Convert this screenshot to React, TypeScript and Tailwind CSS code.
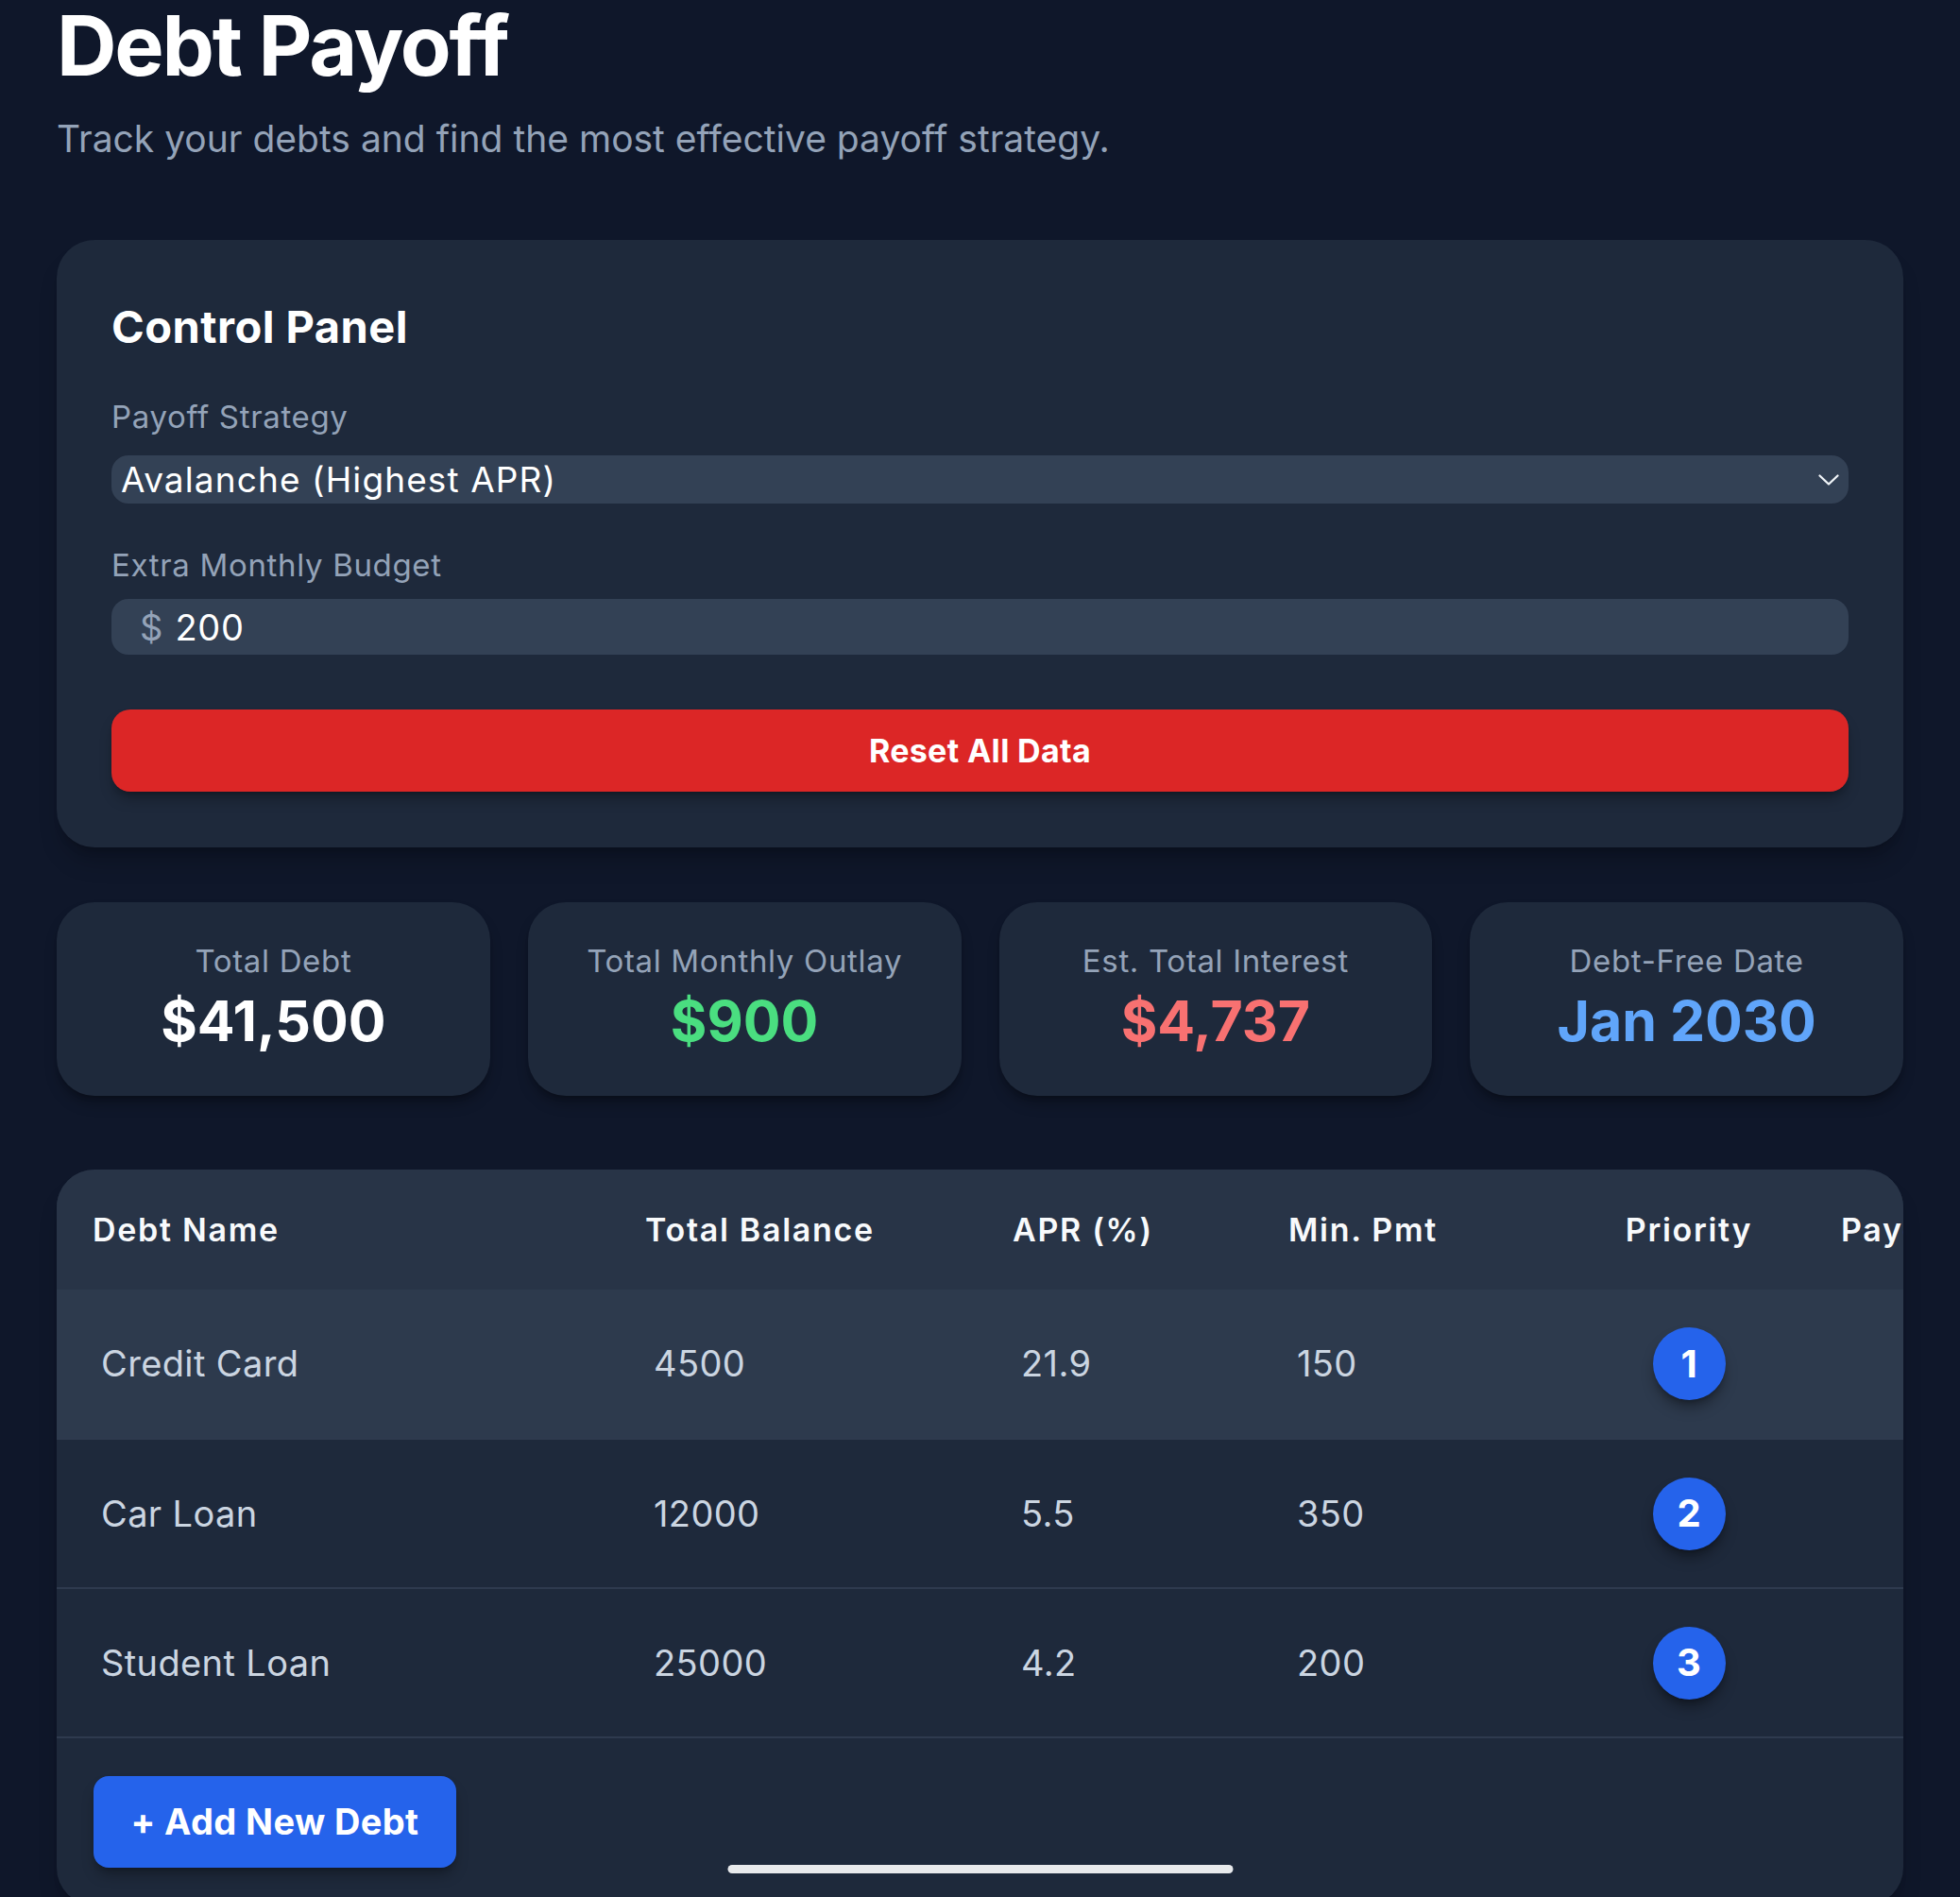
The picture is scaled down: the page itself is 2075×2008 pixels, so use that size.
import React from 'react';

type Debt = { name: string; balance: string; apr: string; min: string; priority: number };

const debts: Debt[] = [
  { name: 'Credit Card', balance: '4500', apr: '21.9', min: '150', priority: 1 },
  { name: 'Car Loan', balance: '12000', apr: '5.5', min: '350', priority: 2 },
  { name: 'Student Loan', balance: '25000', apr: '4.2', min: '200', priority: 3 },
];

const stats = [
  { label: 'Total Debt', value: '$41,500', color: 'text-white' },
  { label: 'Total Monthly Outlay', value: '$900', color: 'text-[#4ade80]' },
  { label: 'Est. Total Interest', value: '$4,737', color: 'text-[#f87171]' },
  { label: 'Debt-Free Date', value: 'Jan 2030', color: 'text-[#60a5fa]' },
];

const App = () => {
  return (
    <div className="min-h-screen bg-[#0f172a] font-['Inter','Noto_Sans',sans-serif] text-white">
      <div className="px-[60px] pt-[4px] pb-[40px]">
        <h1 className="text-[88px] font-bold leading-none tracking-tight">Debt Payoff</h1>
        <p className="mt-[26px] text-[39px] leading-[57px] text-[#94a3b8]">
          Track your debts and find the most effective payoff strategy.
        </p>

        {/* control panel */}
        <section className="mt-[79px] rounded-[40px] bg-[#1e293b] px-[58px] pt-[58px] pb-[59px] shadow-xl shadow-black/20">
          <h2 className="text-[47px] font-bold leading-[68px] tracking-[0.01em]">Control Panel</h2>

          <label className="mt-[38px] block text-[33px] leading-[46px] tracking-[0.02em] text-[#94a3b8]">Payoff Strategy</label>
          <div className="mt-[18px] flex h-[51px] items-center rounded-[18px] bg-[#334155] pl-[10px] pr-[10px]">
            <span className="flex-1 text-[37px] leading-none tracking-[0.03em]">Avalanche (Highest APR)</span>
            <svg width="22" height="12" viewBox="0 0 22 12" fill="none">
              <polyline points="1.5,1.5 11,10.5 20.5,1.5" stroke="#f1f5f9" strokeWidth="2.2" strokeLinecap="round" strokeLinejoin="round" />
            </svg>
          </div>

          <label className="mt-[42px] block text-[33px] leading-[46px] tracking-[0.02em] text-[#94a3b8]">Extra Monthly Budget</label>
          <div className="mt-[13px] flex h-[59px] items-center rounded-[18px] bg-[#334155] pl-[30px]">
            <span className="text-[38px] leading-none text-[#94a3b8]">$</span>
            <input
              defaultValue="200"
              className="ml-[13px] flex-1 bg-transparent text-[38px] leading-none tracking-[0.02em] text-white outline-none"
            />
          </div>

          <button className="mt-[58px] h-[87px] w-full rounded-[20px] bg-[#dc2626] text-[34px] font-bold tracking-[0.01em] text-white shadow-lg shadow-black/30">
            Reset All Data
          </button>
        </section>

        {/* summary */}
        <div className="mt-[58px] grid grid-cols-4 gap-[40px]">
          {stats.map((s) => (
            <div
              key={s.label}
              className="flex h-[205px] flex-col items-center rounded-[40px] bg-[#1e293b] pt-[38px] shadow-lg shadow-black/30"
            >
              <div className="text-[33px] leading-[48px] tracking-[0.02em] text-[#94a3b8]">{s.label}</div>
              <div className={`mt-[4px] text-[59px] font-bold leading-[72px] ${s.color}`}>{s.value}</div>
            </div>
          ))}
        </div>

        {/* debts table */}
        <section className="mt-[78px] overflow-hidden rounded-[40px] bg-[#1e293b] shadow-xl shadow-black/20">
          <table className="w-[2151px] table-fixed border-collapse text-left">
            <colgroup>
              <col className="w-[585px]" />
              <col className="w-[389px]" />
              <col className="w-[292px]" />
              <col className="w-[339px]" />
              <col className="w-[246px]" />
              <col className="w-[300px]" />
            </colgroup>
            <thead className="bg-[#283447]">
              <tr className="h-[127px] text-[34px] font-semibold tracking-wider text-[#f8fafc]">
                <th className="pl-[38px] font-semibold">Debt Name</th>
                <th className="pl-[38px] font-semibold">Total Balance</th>
                <th className="pl-[38px] font-semibold">APR (%)</th>
                <th className="pl-[38px] font-semibold">Min. Pmt</th>
                <th className="text-center font-semibold">Priority</th>
                <th className="pl-[38px] font-semibold whitespace-nowrap">Payoff Date</th>
              </tr>
            </thead>
            <tbody>
              {debts.map((d, i) => (
                <tr
                  key={d.name}
                  className={`h-[158px] border-b-2 border-[#2e3a4e] ${i === 0 ? 'bg-[#2d3a4d]' : ''}`}
                >
                  <td className="pl-[38px]">
                    <input defaultValue={d.name} className="w-full bg-transparent px-[9px] text-[38px] tracking-[0.01em] text-[#cbd5e1] outline-none" />
                  </td>
                  <td className="pl-[38px]">
                    <input defaultValue={d.balance} className="w-full bg-transparent px-[9px] text-[38px] tracking-[0.01em] text-[#cbd5e1] outline-none" />
                  </td>
                  <td className="pl-[38px]">
                    <input defaultValue={d.apr} className="w-full bg-transparent px-[9px] text-[38px] tracking-[0.01em] text-[#cbd5e1] outline-none" />
                  </td>
                  <td className="pl-[38px]">
                    <input defaultValue={d.min} className="w-full bg-transparent px-[9px] text-[38px] tracking-[0.01em] text-[#cbd5e1] outline-none" />
                  </td>
                  <td>
                    <div className="mx-auto flex h-[77px] w-[77px] items-center justify-center rounded-full bg-[#2563eb] text-[40px] font-bold shadow-lg shadow-black/40">
                      {d.priority}
                    </div>
                  </td>
                  <td className="pl-[38px] text-[38px] text-[#cbd5e1]"></td>
                </tr>
              ))}
            </tbody>
          </table>
          <div className="px-[39px] pt-[40px] pb-[40px]">
            <button className="h-[97px] w-[384px] rounded-[16px] bg-[#2563eb] text-[38px] font-bold tracking-[0.01em] text-white shadow-lg shadow-black/30">
              + Add New Debt
            </button>
          </div>
        </section>
      </div>

      {/* home indicator */}
      <div className="fixed bottom-[25px] left-1/2 h-[9px] w-[535px] -translate-x-1/2 rounded-full bg-[#e8eaec]" />
    </div>
  );
};

export default App;
